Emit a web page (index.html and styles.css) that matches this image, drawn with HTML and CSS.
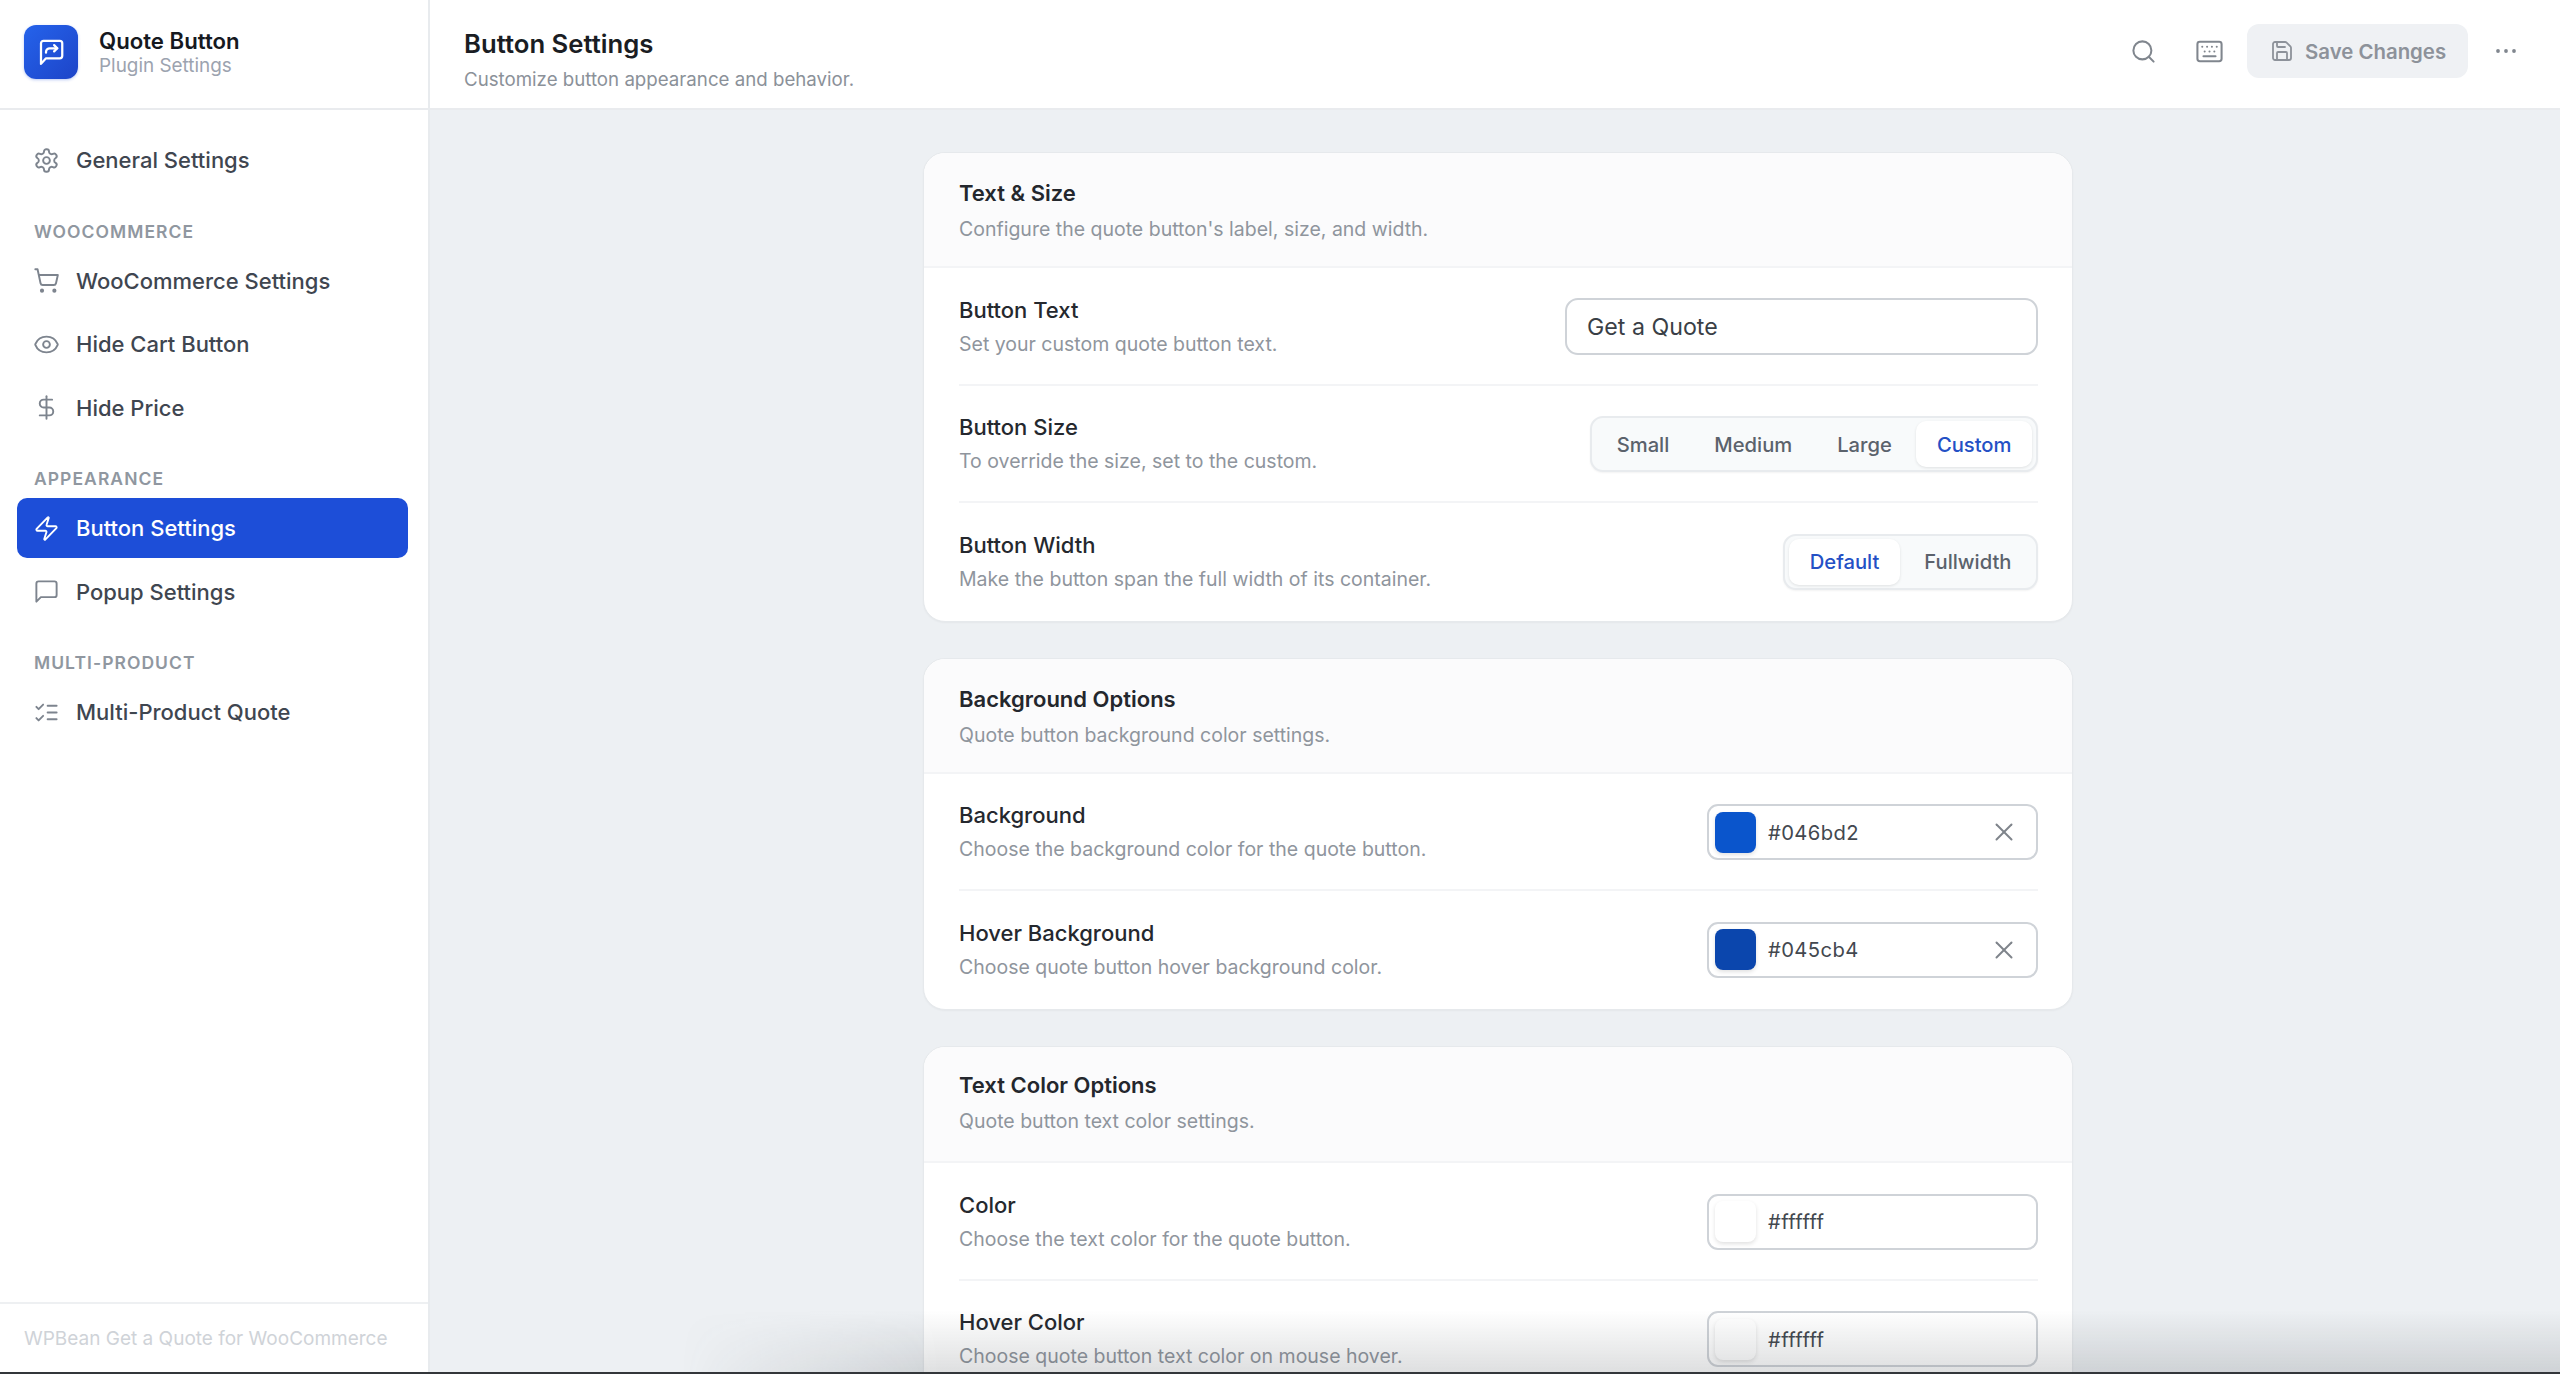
FILE: index.html
```html
<!DOCTYPE html>
<html lang="en">
<head>
<meta charset="utf-8">
<title>Button Settings</title>
<link rel="stylesheet" href="styles.css">
</head>
<body>
<div class="app">
  <aside class="sidebar">
    <div class="brand">
      <div class="logo">
        <svg viewBox="0 0 24 24" class="logo-icon"><path d="M21 15a2 2 0 0 1-2 2H8l-4 4.5V5a2 2 0 0 1 2-2h13a2 2 0 0 1 2 2z"/><path d="M8 12.5v-.5a3 3 0 0 1 3-3h6"/><path d="m14.5 6.5 2.5 2.5-2.5 2.5"/></svg>
      </div>
      <div class="brand-text">
        <div class="brand-title">Quote Button</div>
        <div class="brand-sub">Plugin Settings</div>
      </div>
    </div>
    <nav class="nav">
      <a class="nav-item"><svg viewBox="0 0 24 24" class="icon"><path d="M12.22 2h-.44a2 2 0 0 0-2 2v.18a2 2 0 0 1-1 1.73l-.43.25a2 2 0 0 1-2 0l-.15-.08a2 2 0 0 0-2.73.73l-.22.38a2 2 0 0 0 .73 2.73l.15.1a2 2 0 0 1 1 1.72v.51a2 2 0 0 1-1 1.74l-.15.09a2 2 0 0 0-.73 2.73l.22.38a2 2 0 0 0 2.73.73l.15-.08a2 2 0 0 1 2 0l.43.25a2 2 0 0 1 1 1.73V20a2 2 0 0 0 2 2h.44a2 2 0 0 0 2-2v-.18a2 2 0 0 1 1-1.73l.43-.25a2 2 0 0 1 2 0l.15.08a2 2 0 0 0 2.73-.73l.22-.39a2 2 0 0 0-.73-2.73l-.15-.08a2 2 0 0 1-1-1.74v-.5a2 2 0 0 1 1-1.74l.15-.09a2 2 0 0 0 .73-2.73l-.22-.38a2 2 0 0 0-2.73-.73l-.15.08a2 2 0 0 1-2 0l-.43-.25a2 2 0 0 1-1-1.73V4a2 2 0 0 0-2-2z"/><circle cx="12" cy="12" r="3"/></svg>General Settings</a>
      <div class="nav-label">WOOCOMMERCE</div>
      <a class="nav-item"><svg viewBox="0 0 24 24" class="icon"><circle cx="8" cy="21" r="1"/><circle cx="19" cy="21" r="1"/><path d="M2.05 2.05h2l2.66 12.42a2 2 0 0 0 2 1.58h9.78a2 2 0 0 0 1.95-1.57l1.65-7.43H5.12"/></svg>WooCommerce Settings</a>
      <a class="nav-item"><svg viewBox="0 0 24 24" class="icon"><path d="M2.062 12.348a1 1 0 0 1 0-.696 10.75 10.75 0 0 1 19.876 0 1 1 0 0 1 0 .696 10.75 10.75 0 0 1-19.876 0"/><circle cx="12" cy="12" r="3"/></svg>Hide Cart Button</a>
      <a class="nav-item"><svg viewBox="0 0 24 24" class="icon"><path d="M12 2v20"/><path d="M17 5H9.5a3.5 3.5 0 0 0 0 7h5a3.5 3.5 0 0 1 0 7H6"/></svg>Hide Price</a>
      <div class="nav-label">APPEARANCE</div>
      <a class="nav-item active"><svg viewBox="0 0 24 24" class="icon"><path d="M4 14a1 1 0 0 1-.78-1.63l9.9-10.2a.5.5 0 0 1 .86.46l-1.92 6.02A1 1 0 0 0 13 10h7a1 1 0 0 1 .78 1.63l-9.9 10.2a.5.5 0 0 1-.86-.46l1.92-6.02A1 1 0 0 0 11 14z"/></svg>Button Settings</a>
      <a class="nav-item"><svg viewBox="0 0 24 24" class="icon"><path d="M21 15a2 2 0 0 1-2 2H7l-4 4V5a2 2 0 0 1 2-2h14a2 2 0 0 1 2 2z"/></svg>Popup Settings</a>
      <div class="nav-label">MULTI-PRODUCT</div>
      <a class="nav-item"><svg viewBox="0 0 24 24" class="icon"><path d="m3 17 2 2 4-4"/><path d="m3 7 2 2 4-4"/><path d="M13 6h8"/><path d="M13 12h8"/><path d="M13 18h8"/></svg>Multi-Product Quote</a>
    </nav>
    <div class="side-footer">WPBean Get a Quote for WooCommerce</div>
  </aside>
  <div class="main">
    <header class="topbar">
      <div class="topbar-text">
        <h1 class="page-title">Button Settings</h1>
        <p class="page-sub">Customize button appearance and behavior.</p>
      </div>
      <div class="topbar-actions">
        <svg viewBox="0 0 24 24" class="icon tool-search"><circle cx="11" cy="11" r="8"/><path d="m21 21-4.3-4.3"/></svg>
        <svg viewBox="0 0 24 24" class="icon tool-keys"><rect x="2" y="4" width="20" height="16" rx="2"/><path d="M10 8h.01M12 12h.01M14 8h.01M16 12h.01M18 8h.01M6 8h.01M7 16h10M8 12h.01"/></svg>
        <button class="save"><svg viewBox="0 0 24 24" class="icon"><path d="M15.2 3a2 2 0 0 1 1.4.6l3.8 3.8a2 2 0 0 1 .6 1.4V19a2 2 0 0 1-2 2H5a2 2 0 0 1-2-2V5a2 2 0 0 1 2-2z"/><path d="M17 21v-7a1 1 0 0 0-1-1H8a1 1 0 0 0-1 1v7"/><path d="M7 3v4a1 1 0 0 0 1 1h7"/></svg>Save Changes</button>
        <svg viewBox="0 0 24 24" class="icon tool-more"><circle cx="4" cy="12" r="1.9"/><circle cx="12" cy="12" r="1.9"/><circle cx="20" cy="12" r="1.9"/></svg>
      </div>
    </header>
    <div class="content">
      <section class="card">
        <div class="card-head"><h2 class="card-title">Text &amp; Size</h2><p class="desc">Configure the quote button's label, size, and width.</p></div>
        <div class="row"><div class="row-text"><div class="label">Button Text</div><p class="desc">Set your custom quote button text.</p></div>
          <div class="text-input">Get a Quote</div></div>
        <div class="row"><div class="row-text"><div class="label">Button Size</div><p class="desc">To override the size, set to the custom.</p></div>
          <div class="seg"><span class="seg-btn">Small</span><span class="seg-btn">Medium</span><span class="seg-btn">Large</span><span class="seg-btn on">Custom</span></div></div>
        <div class="row"><div class="row-text"><div class="label">Button Width</div><p class="desc">Make the button span the full width of its container.</p></div>
          <div class="seg"><span class="seg-btn on">Default</span><span class="seg-btn">Fullwidth</span></div></div>
      </section>
      <section class="card">
        <div class="card-head"><h2 class="card-title">Background Options</h2><p class="desc">Quote button background color settings.</p></div>
        <div class="row"><div class="row-text"><div class="label">Background</div><p class="desc">Choose the background color for the quote button.</p></div>
          <div class="color"><span class="swatch swatch-bg"></span><span class="hex">#046bd2</span><svg viewBox="0 0 24 24" class="icon clear"><path d="M18 6 6 18"/><path d="m6 6 12 12"/></svg></div></div>
        <div class="row"><div class="row-text"><div class="label">Hover Background</div><p class="desc">Choose quote button hover background color.</p></div>
          <div class="color"><span class="swatch swatch-hover"></span><span class="hex">#045cb4</span><svg viewBox="0 0 24 24" class="icon clear"><path d="M18 6 6 18"/><path d="m6 6 12 12"/></svg></div></div>
      </section>
      <section class="card">
        <div class="card-head"><h2 class="card-title">Text Color Options</h2><p class="desc">Quote button text color settings.</p></div>
        <div class="row"><div class="row-text"><div class="label">Color</div><p class="desc">Choose the text color for the quote button.</p></div>
          <div class="color"><span class="swatch swatch-white"></span><span class="hex">#ffffff</span></div></div>
        <div class="row"><div class="row-text"><div class="label">Hover Color</div><p class="desc">Choose quote button text color on mouse hover.</p></div>
          <div class="color"><span class="swatch swatch-white"></span><span class="hex">#ffffff</span></div></div>
      </section>
    </div>
  </div>
  <div class="bottom-shade"></div>
</div>
</body>
</html>
```
FILE: styles.css
```css
* { box-sizing: border-box; }
html, body { margin: 0; height: 100%; overflow: hidden; }
body { font-family: Inter, "Liberation Sans", sans-serif; color: #1f2937; background: #edf0f3; }
p, h1, h2 { margin: 0; }

.app { position: relative; display: flex; height: 100vh; overflow: hidden; border-bottom: 2px solid #33363a; }

/* Sidebar */
.sidebar { width: 430px; flex: none; display: flex; flex-direction: column; background: #fff; border-right: 2px solid #e8ebee; }
.brand { height: 110px; flex: none; display: flex; align-items: center; gap: 21px; padding: 0 0 4px 24px; border-bottom: 2px solid #e9ebee; }
.logo { width: 54px; height: 54px; border-radius: 12px; display: flex; align-items: center; justify-content: center; background: linear-gradient(135deg, #2563eb, #1d44c8); box-shadow: 0 1px 3px rgba(29, 78, 216, .3); }
.logo-icon { width: 30px; height: 30px; fill: none; stroke: #fff; stroke-width: 1.8; stroke-linecap: round; stroke-linejoin: round; }
.brand-title { font-size: 22.2px; font-weight: 600; line-height: 28px; color: #16191f; }
.brand-sub { font-size: 18.9px; line-height: 22px; color: #9ca3af; }

.nav { flex: 1; padding: 20px 20px 0 17px; }
.nav-item { display: flex; align-items: center; gap: 16px; height: 60px; margin-bottom: 3.5px; padding-left: 16px; border-radius: 10px; font-size: 22px; font-weight: 500; color: #3f4650; }
.nav-item .icon { width: 27px; height: 27px; stroke: #7d848e; stroke-width: 1.7; }
.nav-item.active { background: #1d4ed8; color: #fff; }
.nav-item.active .icon { stroke: #fff; }
.nav-label { margin: 29.5px 0 7px 17px; font-size: 17.5px; line-height: 24px; font-weight: 600; letter-spacing: .06em; color: #9097a0; }

.icon { flex: none; fill: none; stroke: currentColor; stroke-width: 2; stroke-linecap: round; stroke-linejoin: round; }

.side-footer { height: 70px; flex: none; display: flex; align-items: center; padding-left: 24px; border-top: 2px solid #eef0f2; font-size: 19px; color: #cfd3d8; }

/* Main */
.main { flex: 1; min-width: 0; display: flex; flex-direction: column; }
.topbar { height: 110px; flex: none; display: flex; align-items: center; justify-content: space-between; padding: 0 42px 6px 34px; background: #fff; border-bottom: 2px solid #e9ebee; }
.topbar-text { margin-top: 19px; }
.page-title { font-size: 25.7px; line-height: 32px; font-weight: 600; color: #1a1d23; }
.page-sub { margin-top: 6px; font-size: 18.7px; line-height: 28px; color: #8b9199; }
.topbar-actions { display: flex; align-items: center; }
.tool-search { width: 27px; height: 27px; color: #80868e; margin-right: 38px; stroke-width: 1.8; }
.tool-keys { width: 29px; height: 29px; color: #80868e; margin-right: 23px; stroke-width: 1.7; }
.save { display: flex; align-items: center; gap: 11px; width: 221px; height: 54px; padding: 0 0 0 23px; border: 0; border-radius: 12px; background: #eff1f4; font: 600 20.4px Inter, "Liberation Sans", sans-serif; color: #8d929a; }
.save .icon { width: 24px; height: 24px; stroke-width: 1.8; }
.tool-more { width: 24px; height: 24px; margin-left: 26px; color: #80868e; fill: currentColor; stroke: none; }

.content { flex: 1; min-height: 0; overflow: hidden; padding: 42px 0 0 6px; display: flex; flex-direction: column; align-items: center; gap: 36px; }
.card { width: 1150px; flex: none; background: #fff; border: 1px solid #e6e9ec; border-radius: 22px; overflow: hidden; box-shadow: 0 1px 2px rgba(0, 0, 0, .04); }
.card-head { height: 115px; padding: 26px 35px 0; background: #fbfbfc; border-bottom: 2px solid #f3f4f6; }
.card:last-child .card-head { height: 116.5px; padding-top: 24px; }
.card-title { font-size: 22px; line-height: 28px; font-weight: 600; color: #24272d; }
.card-head .desc { margin-top: 8px; }
.desc { font-size: 19.5px; line-height: 28px; color: #8f959d; }
.row { position: relative; height: 117.5px; margin: 0 34px 0 35px; padding-top: 2px; display: flex; align-items: center; justify-content: space-between; border-bottom: 2px solid #f3f4f6; }
.row:last-child { border-bottom: 0; padding-top: 0; }
.label { font-size: 22px; line-height: 28px; font-weight: 500; color: #25282e; margin-bottom: 6px; }

.text-input { width: 473px; height: 57px; display: flex; align-items: center; padding-left: 20px; border: 2px solid #cfd3d8; border-radius: 13px; font-size: 23.2px; color: #3a3f46; }

.seg { display: flex; height: 56px; align-items: center; gap: 4px; padding: 0 4px; background: #f8fafb; border: 2px solid #e8ebee; border-radius: 13px; box-shadow: 0 1px 2px rgba(0, 0, 0, .05); }
.seg-btn { height: 46px; display: flex; align-items: center; padding: 0 20.5px; border-radius: 10px; font-size: 20.2px; font-weight: 500; color: #5b626c; }
.seg-btn.on { background: #fff; color: #2450c5; box-shadow: 0 1px 3px rgba(0, 0, 0, .1); }

.color { position: relative; width: 331px; height: 56px; display: flex; align-items: center; gap: 12px; padding-left: 6px; border: 2px solid #cfd3d8; border-radius: 11px; }
.swatch { width: 41px; height: 41px; border-radius: 8px; box-shadow: 0 2px 4px rgba(0, 0, 0, .12); }
.swatch-bg { background: #0a55cc; }
.swatch-hover { background: #0b46ad; }
.swatch-white { background: #fff; }
.hex { font-size: 20.2px; letter-spacing: .02em; color: #43484f; }
.clear { position: absolute; right: 17px; top: 50%; width: 30px; height: 30px; margin-top: -15px; color: #7f848b; stroke-width: 1.6; }

.bottom-shade { position: absolute; left: 680px; right: 0; bottom: 0; height: 62px; pointer-events: none; background: linear-gradient(to top, rgba(60, 66, 72, .17), rgba(60, 66, 72, 0)); -webkit-mask-image: linear-gradient(to right, transparent, #000 260px); mask-image: linear-gradient(to right, transparent, #000 260px); }
```
